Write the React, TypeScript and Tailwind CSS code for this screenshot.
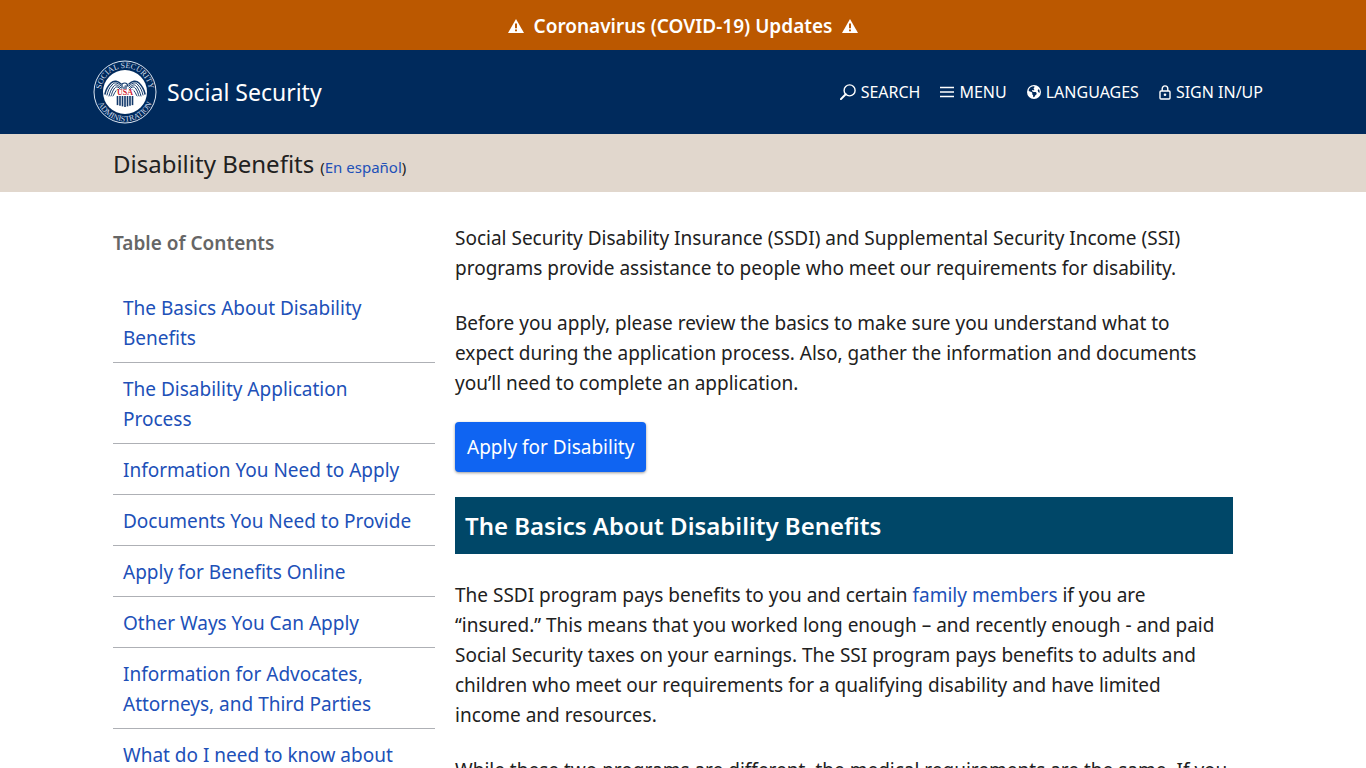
import type { ReactNode } from 'react';
import { FaEarthAmericas } from 'react-icons/fa6';

const contents = [
  'The Basics About Disability Benefits',
  'The Disability Application Process',
  'Information You Need to Apply',
  'Documents You Need to Provide',
  'Apply for Benefits Online',
  'Other Ways You Can Apply',
  'Information for Advocates, Attorneys, and Third Parties',
  'What do I need to know about Advance Designation?',
];

const stripes = [-7.5, -5, -2.5, 0, 2.5, 5, 7.5];

const WarningIcon = () => (
  <svg viewBox="0 0 16 14" className="h-[14px] w-4" aria-hidden="true">
    <path d="M8 0 16 14H0Z" fill="white" />
    <path d="M7 4.5h2v4.7H7zM7 10.4h2v1.8H7z" fill="#bb5800" />
  </svg>
);

const SearchIcon = () => (
  <svg viewBox="0 0 16 16" className="size-4" fill="none" stroke="currentColor" aria-hidden="true">
    <circle cx="9.6" cy="6.4" r="5.5" strokeWidth="1.4" />
    <path d="M5.7 10.3.9 15.1" strokeWidth="2" strokeLinecap="round" />
  </svg>
);

const MenuIcon = () => (
  <svg viewBox="0 0 14 12" className="h-3 w-[14px]" stroke="currentColor" strokeWidth="1.5" aria-hidden="true">
    <path d="M0 1.5h14M0 6h14M0 10.5h14" />
  </svg>
);

const LockIcon = () => (
  <svg viewBox="0 0 12 15" className="h-[15px] w-3" fill="none" stroke="currentColor" aria-hidden="true">
    <rect x="1" y="6" width="10" height="8" rx="1" strokeWidth="1.4" />
    <path d="M3.2 6V3.7a2.8 2.8 0 0 1 5.6 0V6" strokeWidth="1.4" />
    <circle cx="6" cy="9.8" r="1.3" fill="currentColor" stroke="none" />
  </svg>
);

const Seal = () => (
  <svg viewBox="-32 -32 64 64" className="size-16" aria-hidden="true">
    <defs>
      <path id="seal-top" d="M-23.8 3A24 24 0 1 1 23.8 3" />
      <path id="seal-bottom" d="M-28.8-3A29 29 0 1 0 28.8-3" />
    </defs>
    <circle r="31" fill="#002a5c" stroke="#dce6f2" strokeWidth="1" />
    <circle r="22" fill="white" />
    <g fill="#d3deec" fontFamily="'Liberation Serif', serif" fontSize="8" textAnchor="middle">
      <text>
        <textPath href="#seal-top" startOffset="50%">SOCIAL SECURITY</textPath>
      </text>
      <text>
        <textPath href="#seal-bottom" startOffset="50%">ADMINISTRATION</textPath>
      </text>
    </g>
    {/* wings */}
    <g fill="none" stroke="#12396b" strokeWidth="1" strokeLinecap="round">
      <path d="M-4-8C-7-11-11-12-14-9-17-6-19-3-20 2" strokeWidth="1.5" />
      <path d="M-4-6C-8-10-11-10-13-7-16-4-17-1-18 3" />
      <path d="M-4-4C-8-8-10-8-12-5-14-2-15 0-16 4" />
      <path d="M-4-2C-7-6-9-6-11-3-13 0-13 2-14 4" />
      <path d="M-5-1C-7-3-8-3-9-1-11 1-11 3-12 4" />
      <path d="M4-8C7-11 11-12 14-9 17-6 19-3 20 2" strokeWidth="1.5" />
      <path d="M4-6C8-10 11-10 13-7 16-4 17-1 18 3" />
      <path d="M4-4C8-8 10-8 12-5 14-2 15 0 16 4" />
      <path d="M4-2C7-6 9-6 11-3 13 0 13 2 14 4" />
      <path d="M5-1C7-3 8-3 9-1 11 1 11 3 12 4" />
      <path d="M-3-8Q0-10 2-8L3-6 0-6M-3-8-3-4M-1-5-1-3M1-5 1-3" strokeWidth="1.2" />
    </g>
    {/* shield */}
    {stripes.map((x) => (
      <rect key={x} x={x - 0.8} y="4" width="1.6" height={11 - Math.abs(x) / 4} fill="#12396b" />
    ))}
    <rect x="-8.5" y="-2.5" width="17" height="6.5" fill="white" />
    <text x="0" y="3" textAnchor="middle" fill="#d0202e" fontFamily="'Liberation Serif', serif" fontWeight="bold" fontSize="8">
      USA
    </text>
  </svg>
);

interface NavItemProps {
  icon: ReactNode;
  label: string;
}

const NavItem = ({ icon, label }: NavItemProps) => (
  <button type="button" className="flex cursor-pointer items-center gap-[5px] text-base text-white">
    {icon}
    {label}
  </button>
);

export default function App() {
  return (
    <div className="min-h-screen bg-white font-['Noto_Sans',sans-serif] text-[19px] leading-[30px] text-[#212121]">
      <a href="#covid" className="flex h-[50px] items-center justify-center gap-[10px] bg-[#bb5800] pt-[2px] font-semibold text-white">
        <WarningIcon />
        Coronavirus (COVID-19) Updates
        <WarningIcon />
      </a>

      <header className="bg-[#002a5c]">
        <div className="mx-auto flex h-[84px] max-w-[1180px] items-center justify-between pr-[10px]">
          <a href="#home" className="flex items-center gap-[10px] text-[23px] text-white">
            <Seal />
            Social Security
          </a>
          <nav className="flex items-center gap-5">
            <NavItem icon={<SearchIcon />} label="SEARCH" />
            <NavItem icon={<MenuIcon />} label="MENU" />
            <NavItem icon={<FaEarthAmericas size={14} />} label="LANGUAGES" />
            <NavItem icon={<LockIcon />} label="SIGN IN/UP" />
          </nav>
        </div>
      </header>

      <div className="bg-[#e1d7cd]">
        <div className="mx-auto flex h-[58px] max-w-[1180px] items-baseline gap-[6px] px-5 pt-[15px]">
          <h1 className="text-2xl leading-[30px]">Disability Benefits</h1>
          <span className="text-[15px]">
            (<a href="#es" className="text-[#2050b8]">En español</a>)
          </span>
        </div>
      </div>

      <div className="mx-auto flex max-w-[1180px] gap-5 px-5">
        <aside className="w-[322px] shrink-0 pt-9">
          <h2 className="font-semibold text-[#666]">Table of Contents</h2>
          <ul className="mt-6">
            {contents.map((item) => (
              <li key={item} className="border-b border-[#aeb0b5]">
                <a href="#section" className="block pt-[11px] pr-[15px] pb-[9px] pl-[10px] text-[#2050b8]">{item}</a>
              </li>
            ))}
          </ul>
        </aside>

        <main className="min-w-0 flex-1 pt-[31px] pr-5">
          <p>
            Social Security Disability Insurance (SSDI) and Supplemental Security Income (SSI) programs provide
            assistance to people who meet our requirements for disability.
          </p>
          <p className="mt-[25px]">
            Before you apply, please review the basics to make sure you understand what to expect during the
            application process. Also, gather the information and documents you’ll need to complete an application.
          </p>
          <a href="#apply" className="mt-6 inline-block rounded bg-[#0f64f2] px-3 py-[10px] text-white shadow-[0_1px_3px_rgba(0,0,0,0.4)]">
            Apply for Disability
          </a>
          <h2 className="mt-[25px] bg-[#004768] px-[10px] py-3 text-2xl leading-[33px] font-semibold text-white">
            The Basics About Disability Benefits
          </h2>
          <p className="mt-[26px] pr-[5px]">
            The SSDI program pays benefits to you and certain{' '}
            <a href="#family" className="text-[#2050b8]">family members</a> if you are “insured.” This means that
            you worked long enough – and recently enough - and paid Social Security taxes on your earnings. The SSI
            program pays benefits to adults and children who meet our requirements for a qualifying disability and
            have limited income and resources.
          </p>
          <p className="mt-[25px]">
            While these two programs are different, the medical requirements are the same. If you meet the
            non-medical requirements, monthly benefits are paid if you have a medical condition expected to last at
            least one year or result in death.
          </p>
        </main>
      </div>
    </div>
  );
}
